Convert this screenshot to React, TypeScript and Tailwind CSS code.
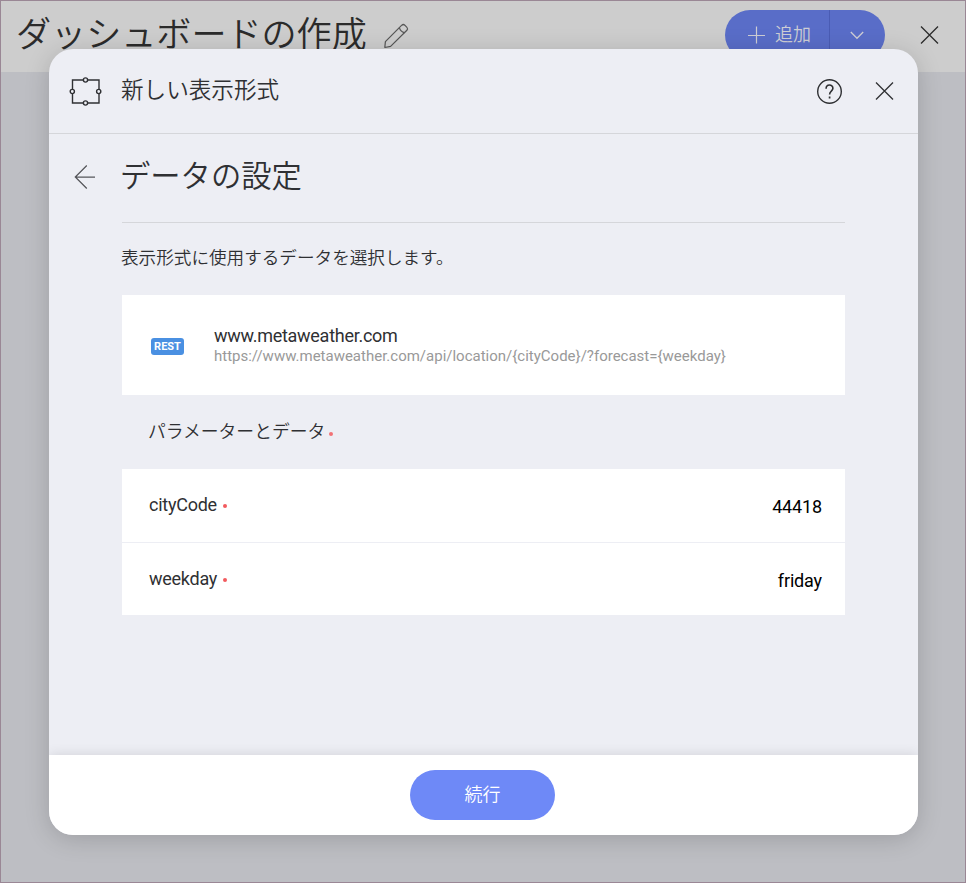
import React from "react";

function Cross({ className }: { className: string }) {
  return (
    <svg className={className} width="20" height="20" viewBox="0 0 20 20" fill="none" stroke="currentColor" strokeWidth="1.3">
      <path d="M2 1.5 19 18.5M19 1.5 2 18.5" />
    </svg>
  );
}

function TopBar() {
  return (
    <header className="flex h-[71px] shrink-0 items-start bg-[#cdcdcd] text-[#2b2b2b]">
      <h1 className="ml-[15px] mt-[9px] h-[50px] w-[353px] whitespace-nowrap text-[35.1px] font-[350] leading-[50px]">ダッシュボードの作成</h1>
      <svg className="ml-[13px] mt-[21px] text-[#555]" width="28" height="28" viewBox="0 0 28 28" fill="none" stroke="currentColor" strokeWidth="1.2" strokeLinejoin="round">
        <path d="M2.8 25.5 3.4 19.6 19.8 3.2Q21.3 1.8 22.8 3.2L24.9 5.3Q26.3 6.8 24.9 8.3L8.6 24.4Z" />
        <path d="M17.4 5.6Q18.4 9.7 22.5 10.7" />
      </svg>
      <div className="ml-auto mt-[9px] flex h-[50px] w-40 overflow-hidden rounded-full bg-[#596dc8] text-[#cdcdd4]">
        <div className="flex w-[105px] items-center border-r border-[#4a5cb4] pl-[22px]">
          <svg width="18" height="18" viewBox="0 0 18 18" fill="none" stroke="currentColor" strokeWidth="1.2">
            <path d="M9.5.5v17M1 9.5h17" />
          </svg>
          <span className="ml-[10px] mt-[-1px] text-[18px] font-[350] leading-6">追加</span>
        </div>
        <div className="flex flex-1 items-center justify-center pr-px">
          <svg width="14" height="9" viewBox="0 0 14 9" fill="none" stroke="currentColor" strokeWidth="1.3">
            <path d="m.8 1 6.2 6.3L13.2 1" />
          </svg>
        </div>
      </div>
      <Cross className="ml-[34px] mr-[26px] mt-6" />
    </header>
  );
}

function DialogHeader() {
  return (
    <div className="flex h-[85px] shrink-0 items-center border-b border-[#d5d6da] pl-5 pr-6">
      <svg width="33" height="30" viewBox="0 0 33 30" fill="none" stroke="currentColor" strokeWidth="1.4">
        <path d="M14 4H3.5V13M19 4H30V13M3.5 18V27H14M19 27H30V18" />
        <circle cx="16.5" cy="4" r="2.1" />
        <circle cx="16.5" cy="27" r="2.1" />
        <circle cx="3.3" cy="15.5" r="2.1" />
        <circle cx="29.7" cy="15.5" r="2.1" />
      </svg>
      <h2 className="ml-[19px] mt-[-1px] whitespace-nowrap text-[22.6px] font-[350] leading-8">新しい表示形式</h2>
      <svg className="ml-auto" width="27" height="27" viewBox="0 0 27 27" fill="none" stroke="currentColor" strokeWidth="1.4">
        <g transform="translate(1.5 .5)">
          <circle cx="13" cy="13" r="11.8" />
          <path strokeWidth="1.6" d="M9.6 10.2C9.6 5.3 16.4 5.5 16.4 9.8 16.4 12.6 13.1 12.7 13.1 15.9" />
          <path strokeWidth="1.7" d="M13.1 18v2" />
        </g>
      </svg>
      <Cross className="ml-8" />
    </div>
  );
}

function Dot({ className }: { className: string }) {
  return <span className={"size-1 rounded-full bg-[#f25a5e] " + className} />;
}

function Field({ name, value, className }: { name: string; value: string; className: string }) {
  return (
    <div className={"flex items-center justify-between bg-white pl-[27px] pr-[23px] text-[18px] " + className}>
      <label className="mt-[-1px] flex items-center leading-6 tracking-[-0.25px]">
        {name}
        <Dot className="ml-[6px] mt-[2px]" />
      </label>
      <span className="mt-[3px] leading-6 tracking-[-0.15px] text-black">{value}</span>
    </div>
  );
}

export default function App() {
  return (
    <div className="relative flex h-[883px] w-[966px] flex-col overflow-hidden border border-[#9a8795] bg-[#bdbec3] font-['Roboto','Noto_Sans_CJK_JP',sans-serif] text-[#2f3033]">
      <TopBar />
      <section className="absolute left-12 top-12 flex h-[786px] w-[869px] flex-col overflow-hidden rounded-[24px] bg-[#edeef4] shadow-[0_4px_24px_rgba(0,0,0,0.17)]">
        <DialogHeader />
        <main className="flex flex-1 flex-col pl-[73px] pr-[73px]">
          <div className="flex h-[89px] items-center border-b border-[#d5d6da]">
            <svg className="-ml-12 -mt-[2px] mr-6 shrink-0 text-[#55565a]" width="22" height="26" viewBox="0 0 22 26" fill="none" stroke="currentColor" strokeWidth="1.25">
              <path d="M12.8 1.5 1.3 13l11.5 11.5M1.3 13H21" />
            </svg>
            <h3 className="mt-[-3px] whitespace-nowrap text-[30.3px] font-[350] leading-[44px]">データの設定</h3>
          </div>
          <p className="-ml-px mt-[21px] whitespace-nowrap text-[17.6px] font-[350] leading-7">表示形式に使用するデータを選択します。</p>
          <div className="mt-[23px] flex h-[100px] items-center bg-white pl-[29px]">
            <span className="mt-[3px] flex h-[17px] w-[33px] items-center justify-center rounded-[3px] bg-[#4a90e2] text-[11px] font-bold leading-none text-white">REST</span>
            <div className="ml-[30px] mt-px">
              <div className="text-[18px] leading-[20px] tracking-[-0.27px]">www.metaweather.com</div>
              <div className="whitespace-nowrap text-[15px] leading-[20px] text-[#999]">{"https://www.metaweather.com/api/location/{cityCode}/?forecast={weekday}"}</div>
            </div>
          </div>
          <div className="flex h-[74px] items-center pl-[26px]">
            <span className="whitespace-nowrap text-[17.8px] font-[350] leading-6">パラメーターとデータ</span>
            <Dot className="ml-1 mt-[3px] opacity-85" />
          </div>
          <div className="flex flex-col gap-px">
            <Field name="cityCode" value="44418" className="h-[73px]" />
            <Field name="weekday" value="friday" className="h-[72px] pt-px" />
          </div>
        </main>
        <footer className="flex h-[80px] shrink-0 items-center justify-center bg-white pr-[2px] shadow-[0_0_12px_rgba(0,0,0,0.12)]">
          <button className="h-[50px] w-[145px] rounded-full bg-[#6e89f7] pb-[2px] text-[18px] font-[350] text-white">続行</button>
        </footer>
      </section>
    </div>
  );
}
